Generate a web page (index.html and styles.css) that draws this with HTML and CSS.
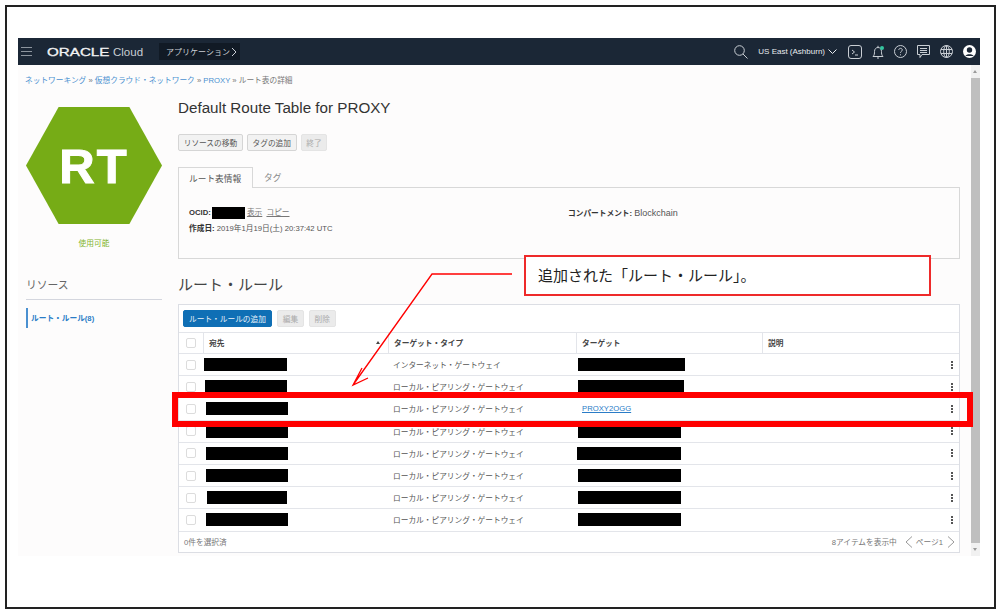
FILE: index.html
```html
<!DOCTYPE html>
<html lang="ja">
<head>
<meta charset="utf-8">
<title>Default Route Table for PROXY</title>
<link rel="stylesheet" href="styles.css">
</head>
<body>
<div class="frame">
  <div class="app">
    <header class="topbar">
      <svg class="ic burger" width="11" height="9" viewBox="0 0 11 9"><path d="M0 .5h11M0 4.5h11M0 8.500h11"/></svg>
      <span class="brand">ORACLE</span><span class="cloud">Cloud</span>
      <span class="apps">アプリケーション<svg class="ic" width="6" height="10" viewBox="0 0 6 10"><path d="M1 1l4 4-4 4"/></svg></span>
      <span class="spacer"></span>
      <svg class="ic search" width="14" height="14" viewBox="0 0 14 14"><circle cx="5.500" cy="5.500" r="4.800"/><path d="M9 9l4.500 4.500"/></svg>
      <span class="region">US East (Ashburn)</span>
      <svg class="ic chev" width="9" height="5" viewBox="0 0 9 5"><path d="M.5.5l4 4 4-4"/></svg>
      <svg class="ic term" width="14" height="14" viewBox="0 0 14 14"><rect x=".5" y=".5" width="13" height="13" rx="2.500"/><path d="M4 5l2.500 2L4 9M7 10h3"/></svg>
      <svg class="ic bell" width="13" height="14" viewBox="0 0 13 14"><path d="M1 11.500c1.500-1.500 1.500-3 1.500-5C2.500 4 4 2.500 6 2.500S9.500 4 9.500 6.500c0 2 0 3.500 1.500 5zM5 13h2M6 2.500V.8"/><circle class="dot" cx="10" cy="3" r="2"/></svg>
      <svg class="ic help" width="13" height="13" viewBox="0 0 13 13"><circle cx="6.500" cy="6.500" r="6"/><path d="M4.800 5c0-2.200 3.500-2.200 3.500 0 0 1.300-1.800 1.300-1.800 2.800M6.500 9.300v1"/></svg>
      <svg class="ic chat" width="13" height="13" viewBox="0 0 13 13"><path d="M.5.500h12v9H5l-2 3v-3H.5zM3 3.500h7M3 5.500h7M3 7.500h7"/></svg>
      <svg class="ic globe" width="13" height="13" viewBox="0 0 13 13"><circle cx="6.500" cy="6.500" r="6"/><ellipse cx="6.500" cy="6.500" rx="2.800" ry="6"/><path d="M1 4.500h11M1 8.500h11M6.500.5v12"/></svg>
      <svg class="user" width="13" height="13" viewBox="0 0 13 13"><circle cx="6.500" cy="6.500" r="6.500" fill="#fff"/><circle cx="6.500" cy="5" r="2.700" fill="#1b2736"/><path d="M2.500 11c.5-2.500 7.500-2.500 8 0z" fill="#1b2736"/></svg>
    </header>
    <div class="viewport">
      <div class="page">
        <nav class="crumbs"><a>ネットワーキング</a> » <a>仮想クラウド・ネットワーク</a> » <a>PROXY</a> » ルート表の詳細</nav>
        <div class="columns">
          <aside class="side">
            <div class="hex"><span>RT</span></div>
            <div class="status">使用可能</div>
            <h3 class="side-title">リソース</h3>
            <a class="side-link">ルート・ルール(8)</a>
          </aside>
          <main class="content">
            <h1>Default Route Table for PROXY</h1>
            <div class="actions">
              <button class="btn">リソースの移動</button>
              <button class="btn">タグの追加</button>
              <button class="btn off">終了</button>
            </div>
            <div class="tabs"><span class="tab on">ルート表情報</span><span class="tab">タグ</span></div>
            <section class="panel">
              <div class="info">
                <p><b>OCID:</b><i class="mask m-ocid"></i> <u>表示</u> <u class="copy">コピー</u></p>
                <p><b>作成日:</b> 2019年1月19日(土) 20:37:42 UTC</p>
              </div>
              <div class="info"><p><b>コンパートメント:</b> <span class="latin">Blockchain</span></p></div>
            </section>
            <h2>ルート・ルール</h2>
            <section class="card">
              <div class="toolbar">
                <button class="btn primary">ルート・ルールの追加</button>
                <button class="btn off">編集</button>
                <button class="btn off">削除</button>
              </div>
              <div class="row head">
                <div class="c c0"><i class="check"></i></div>
                <div class="c c1">宛先<em class="sort"></em></div>
                <div class="c c2">ターゲット・タイプ</div>
                <div class="c c3">ターゲット</div>
                <div class="c c4">説明</div>
              </div>
              <div class="row">
                <div class="c c0"><i class="check"></i></div><div class="c c1"><i class="mask m1"></i></div>
                <div class="c c2">インターネット・ゲートウェイ</div><div class="c c3"><i class="mask t1"></i></div><div class="c c4"><i class="kebab"></i></div>
              </div>
              <div class="row">
                <div class="c c0"><i class="check"></i></div><div class="c c1"><i class="mask m2"></i></div>
                <div class="c c2">ローカル・ピアリング・ゲートウェイ</div><div class="c c3"><i class="mask t2"></i></div><div class="c c4"><i class="kebab"></i></div>
              </div>
              <div class="row">
                <div class="c c0"><i class="check"></i></div><div class="c c1"><i class="mask m3"></i></div>
                <div class="c c2">ローカル・ピアリング・ゲートウェイ</div><div class="c c3"><a class="link">PROXY2OGG</a></div><div class="c c4"><i class="kebab"></i></div>
              </div>
              <div class="row">
                <div class="c c0"><i class="check"></i></div><div class="c c1"><i class="mask m3"></i></div>
                <div class="c c2">ローカル・ピアリング・ゲートウェイ</div><div class="c c3"><i class="mask t3"></i></div><div class="c c4"><i class="kebab"></i></div>
              </div>
              <div class="row">
                <div class="c c0"><i class="check"></i></div><div class="c c1"><i class="mask m3"></i></div>
                <div class="c c2">ローカル・ピアリング・ゲートウェイ</div><div class="c c3"><i class="mask t4"></i></div><div class="c c4"><i class="kebab"></i></div>
              </div>
              <div class="row">
                <div class="c c0"><i class="check"></i></div><div class="c c1"><i class="mask m3"></i></div>
                <div class="c c2">ローカル・ピアリング・ゲートウェイ</div><div class="c c3"><i class="mask t3"></i></div><div class="c c4"><i class="kebab"></i></div>
              </div>
              <div class="row">
                <div class="c c0"><i class="check"></i></div><div class="c c1"><i class="mask m4"></i></div>
                <div class="c c2">ローカル・ピアリング・ゲートウェイ</div><div class="c c3"><i class="mask t3"></i></div><div class="c c4"><i class="kebab"></i></div>
              </div>
              <div class="row">
                <div class="c c0"><i class="check"></i></div><div class="c c1"><i class="mask m3"></i></div>
                <div class="c c2">ローカル・ピアリング・ゲートウェイ</div><div class="c c3"><i class="mask t3"></i></div><div class="c c4"><i class="kebab"></i></div>
              </div>
              <div class="tfoot">
                <span>0件を選択済</span>
                <span class="pager">8アイテムを表示中
                  <svg class="pg" width="8" height="12" viewBox="0 0 8 12"><path d="M7 .5l-6 5.500 6 5.500"/></svg>
                  ページ1
                  <svg class="pg last" width="8" height="12" viewBox="0 0 8 12"><path d="M1 .5l6 5.500-6 5.500"/></svg>
                </span>
              </div>
            </section>
          </main>
        </div>
      </div>
      <div class="scrollbar"><span class="sb-up"></span><span class="sb-thumb"></span><span class="sb-down"></span></div>
    </div>
  </div>
</div>
<div class="highlight"></div>
<div class="callout">追加された「ルート・ルール」。</div>
<svg class="arrow" width="1000" height="616" viewBox="0 0 1000 616"><path d="M512 274H432L353 385M368 378L353 385L362 368"/></svg>
</body>
</html>
```

FILE: styles.css
```css
* { box-sizing: border-box; }
html, body { margin: 0; padding: 0; }
body {
  position: relative;
  width: 1000px;
  height: 616px;
  overflow: hidden;
  background: #fff;
  font-family: "Liberation Sans", "Noto Sans CJK JP", sans-serif;
  font-size: 7.700px;
  color: #555;
}
.frame {
  margin: 5px;
  width: 991px;
  height: 604px;
  border: 2px solid #222;
  padding: 31px 0 0 11px;
}
.app { width: 962px; height: 518px; display: flex; flex-direction: column; }

.topbar {
  height: 27px;
  flex: none;
  background: #1b2736;
  display: flex;
  align-items: center;
  padding: 0 4px 0 3px;
  color: #dfe3e8;
}
.ic { fill: none; stroke: #c9ced4; stroke-width: 1; flex: none; display: block; }
.burger { stroke: #8d959e; }
.brand {
  margin-left: 15px;
  width: 62px;
  font-size: 11.500px;
  font-weight: 400;
  -webkit-text-stroke: .3px #f2f3f5;
  transform: scaleX(1.32);
  transform-origin: left;
  color: #f2f3f5;
}
.cloud { margin-left: 4px; font-size: 11.500px; color: #c9ced4; }
.apps {
  margin-left: 16px;
  width: 81px;
  height: 17px;
  background: #111a25;
  display: flex;
  align-items: center;
  gap: 1px;
  padding-left: 7px;
  font-size: 8px;
  color: #c9ced4;
}
.spacer { flex: 1; }
.region { margin-left: 10px; font-size: 8px; color: #e8ebef; white-space: nowrap; }
.chev { margin-left: 3px; stroke: #e8ebef; }
.term { margin-left: 11px; }
.bell { margin-left: 10px; }
.bell .dot { fill: #35c6a0; stroke: none; }
.help { margin-left: 9px; }
.chat { margin-left: 10px; }
.globe { margin-left: 10px; }
.user { margin-left: 10px; flex: none; display: block; }

.viewport { flex: 1; display: flex; min-height: 0; }
.page { flex: 1; background: #fdfcfc; min-width: 0; }
.scrollbar { width: 9px; display: flex; flex-direction: column; background: #f1f1f1; }
.sb-up, .sb-down { height: 13px; flex: none; position: relative; }
.sb-up::after, .sb-down::after {
  content: "";
  position: absolute;
  left: 2px;
  top: 5px;
  border: 2.500px solid transparent;
  border-top: 0;
  border-bottom: 3px solid #9a9a9a;
}
.sb-down::after { transform: rotate(180deg); }
.sb-thumb { flex: 1; background: #bfbfbf; }

.crumbs { padding: 10px 0 0 7px; height: 21px; line-height: 12px; color: #777; white-space: nowrap; }
.crumbs a { color: #4a90d0; }
.columns { display: flex; padding-right: 11px; }

.side { width: 160px; flex: none; padding: 21px 16px 0 8px; }
.hex {
  width: 136px;
  height: 117px;
  background: #76ac16;
  clip-path: polygon(24% 0, 76% 0, 100% 50%, 76% 100%, 24% 100%, 0 50%);
  display: flex;
  align-items: center;
  justify-content: center;
  color: #fff;
  font-size: 49px;
  font-weight: 700;
  letter-spacing: 2px;
  -webkit-text-stroke: 1px #fff;
}
.status { margin-top: 14px; height: 12px; line-height: 12px; text-align: center; color: #84b52f; }
.side-title {
  margin: 27px 0 8px;
  height: 23px;
  line-height: 16px;
  font-size: 10.800px;
  font-weight: 400;
  color: #666;
  border-bottom: 1px solid #d4d6de;
  white-space: nowrap;
}
.side-link {
  display: block;
  height: 20px;
  line-height: 20px;
  padding: 1px 0 0 3px;
  border-left: 2px solid #4a90d0;
  color: #2a7cc7;
  font-weight: 700;
}

.content { flex: 1; min-width: 0; padding-top: 12px; }
h1 { margin: 0; height: 20px; line-height: 20px; font-size: 15.200px; font-weight: 400; color: #333; }
.actions { margin-top: 16px; display: flex; gap: 4px; height: 17px; }
.btn {
  font: inherit;
  height: 17px;
  padding: 0 4.700px;
  border: 1px solid #d5d5d5;
  border-radius: 2px;
  background: #f2f2f2;
  color: #555;
  white-space: nowrap;
}
.btn.off { background: #ebebeb; border-color: #e4e4e4; color: #aaa; }
.btn.primary { background: #0f6fb5; border-color: #0f6fb5; color: #e8f2fa; width: 89px; padding: 0; }
.tabs { margin-top: 16px; height: 20px; display: flex; font-size: 8.700px; }
.tab { display: flex; align-items: center; padding: 0 11px; color: #888; }
.tab.on {
  width: 75px;
  color: #555;
  background: #fdfcfc;
  border: 1px solid #d8d8d8;
  border-bottom: 0;
  position: relative;
  z-index: 1;
  height: 21px;
  padding: 0 10px;
}
.panel {
  height: 72px;
  border: 1px solid #d8d8d8;
  padding: 19px 10px 0;
  display: grid;
  grid-template-columns: 379px 1fr;
}
.info p { margin: 0 0 4px; height: 12px; line-height: 12px; white-space: nowrap; }
.info b { color: #333; }
.info u { color: #777; }
.info .copy { margin-left: 2px; }
.latin { font-size: 9px; }
h2 { margin: 16px 0 9px; height: 20px; line-height: 20px; font-size: 15px; font-weight: 400; color: #444; }

.card { height: 249px; border: 1px solid #dcdee4; background: #fff; margin-top: 0; }
.toolbar { height: 27px; display: flex; gap: 5px; padding: 5px 4px 0; }
.row {
  height: 22.200px;
  display: grid;
  grid-template-columns: 24px 185px 188px 186px 1fr;
  border-top: 1px solid #e3e5ea;
}
.row.head { height: 21px; color: #444; font-weight: 700; }
.c { display: flex; align-items: center; padding-left: 5px; min-width: 0; white-space: nowrap; }
.head .c { border-left: 1px solid #e3e5ea; padding-bottom: 1px; }
.head .c0 { border-left: 0; }
.c0 { padding-left: 7px; }
.head .c0 { padding-left: 7px; }
.c1 { padding-left: 1px; }
.head .c1 { padding-left: 5px; justify-content: space-between; padding-right: 8px; }
.c3 { padding-left: 2px; }
.head .c3, .head .c4 { padding-left: 5px; }
.c2 { padding-left: 5px; }
.row:not(.head) .c4 { justify-content: flex-end; padding-right: 6px; }
.check {
  width: 10px;
  height: 10px;
  border: 1px solid #dcdcdc;
  border-radius: 2px;
  background: #fff;
  display: block;
}
.sort { border: 2.500px solid transparent; border-top: 0; border-bottom: 3px solid #444; }
.mask { display: inline-block; height: 13px; background: #000; flex: none; }
.m-ocid { width: 33px; height: 12px; vertical-align: middle; margin-left: 1px; }
.m1 { width: 83px; }
.m2 { width: 82px; margin-left: 1px; }
.m3 { width: 82px; margin-left: 2px; }
.m4 { width: 80px; margin-left: 3px; }
.t1 { width: 107px; }
.t2 { width: 106px; }
.t3 { width: 103px; }
.t4 { width: 104px; margin-left: -1px; }
.link { color: #2a7cc7; text-decoration: underline; margin-left: 4px; }
.kebab {
  width: 2px;
  height: 2px;
  background: #555;
  box-shadow: 0 -3px 0 #555, 0 3px 0 #555;
  display: block;
}
.tfoot {
  height: 21px;
  border-top: 1px solid #e3e5ea;
  display: flex;
  align-items: center;
  justify-content: space-between;
  padding: 0 4px 0 5px;
  color: #777;
}
.pager { display: flex; align-items: center; gap: 3px; }
.pg { fill: none; stroke: #999; stroke-width: 1; margin-left: 5px; }
.pg.last { margin-left: 1px; }

.highlight {
  position: absolute;
  left: 172px;
  top: 392px;
  width: 801px;
  height: 35px;
  border: 6px solid #f00;
}
.callout {
  position: absolute;
  left: 524px;
  top: 255px;
  width: 407px;
  height: 41px;
  border: 2px solid #ee2a2a;
  background: #fff;
  padding-left: 12px;
  line-height: 38px;
  font-size: 15px;
  color: #222;
  white-space: nowrap;
}
.arrow { position: absolute; left: 0; top: 0; fill: none; stroke: #f00; stroke-width: 1.300; pointer-events: none; }
```
